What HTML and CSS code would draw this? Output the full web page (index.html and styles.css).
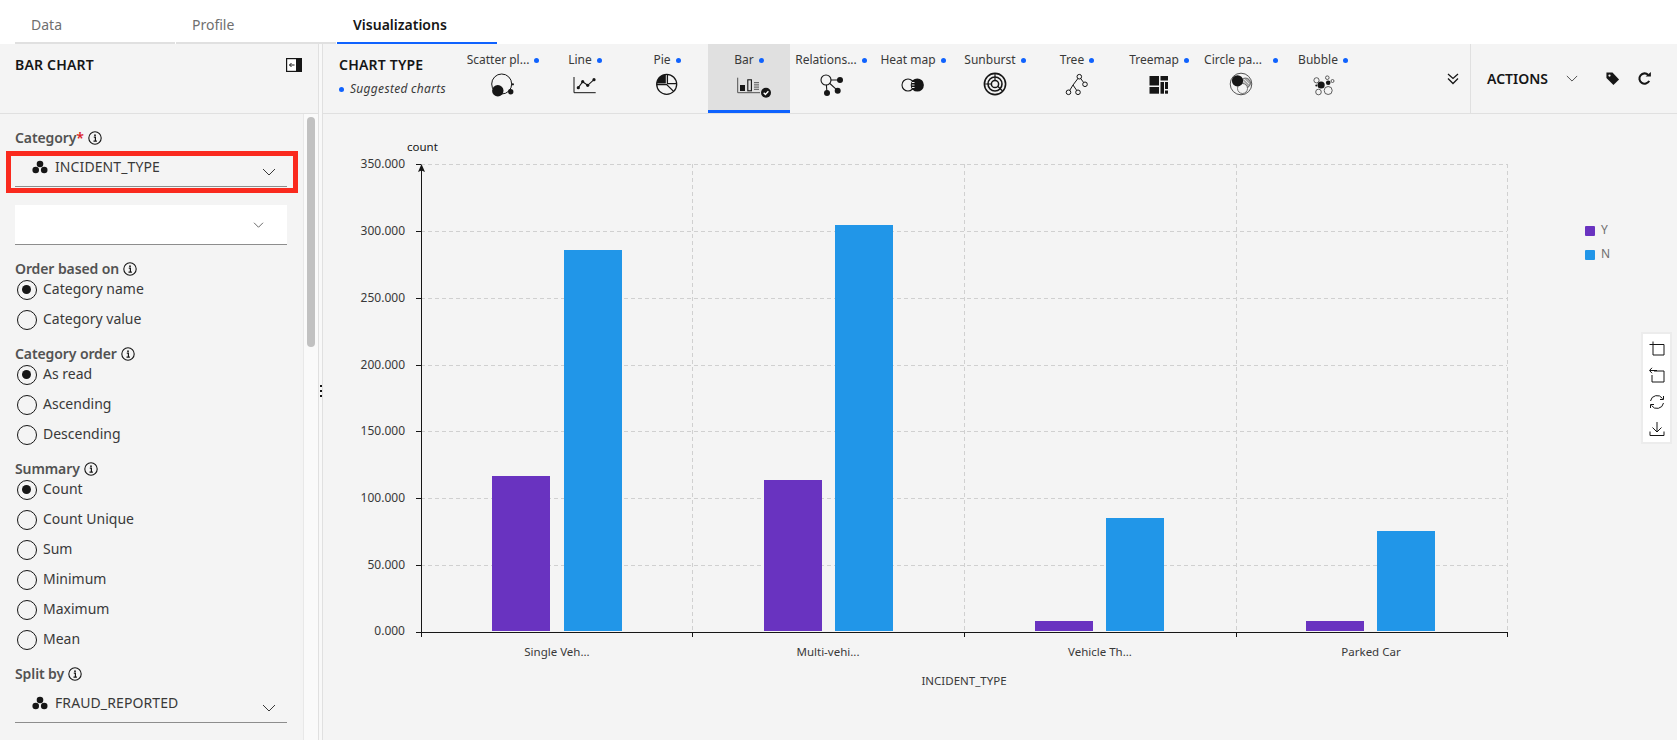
FILE: index.html
```html
<!DOCTYPE html>
<html lang="en">
<head>
<meta charset="utf-8">
<title>Visualizations</title>
<link rel="stylesheet" href="styles.css">
</head>
<body>
<svg class="defs" width="0" height="0" aria-hidden="true">
  <symbol id="i-info" viewBox="0 0 14 14">
    <circle cx="7" cy="7" r="6.2" fill="none" stroke="#161616" stroke-width="1.1"/>
    <path d="M5.8 6.2H7.4V10M5.5 10.1H8.9" fill="none" stroke="#161616" stroke-width="1.2"/>
    <circle cx="7" cy="4.2" r=".9" fill="#161616"/>
  </symbol>
  <symbol id="i-group" viewBox="0 0 16 14">
    <circle cx="8" cy="4" r="3.3" fill="#161616"/>
    <circle cx="3.7" cy="10" r="3.3" fill="#161616"/>
    <circle cx="12.2" cy="10" r="3.3" fill="#161616"/>
  </symbol>
  <symbol id="i-chev" viewBox="0 0 14 8">
    <path d="M1 1L7 7L13 1" fill="none" stroke="#161616" stroke-width=".85"/>
  </symbol>
</svg>

<nav class="tabs">
  <div class="tab">Data</div>
  <div class="tab">Profile</div>
  <div class="tab tab-active">Visualizations</div>
</nav>

<div class="workspace">
  <aside class="sidebar">
    <header class="side-head">
      <h2 class="head-title">BAR CHART</h2>
      <svg class="collapse" viewBox="0 0 16 14">
        <rect x=".6" y=".6" width="14.8" height="12.8" fill="#fff" stroke="#161616" stroke-width="1.2"/>
        <rect x="10" y="0" width="6" height="14" fill="#161616"/>
        <path d="M8.5 7H3.5M5.5 5L3.5 7L5.5 9" fill="none" stroke="#161616"/>
      </svg>
    </header>
    <div class="side-body">
      <form class="form">
        <div class="label label-first">Category<span class="req">*</span> <svg class="info"><use href="#i-info"/></svg></div>
        <div class="select">
          <svg class="group-icon"><use href="#i-group"/></svg>
          <span class="select-text">INCIDENT_TYPE</span>
          <svg class="chev"><use href="#i-chev"/></svg>
          <div class="highlight"></div>
        </div>
        <div class="select-white"><svg class="chev-small"><use href="#i-chev"/></svg></div>

        <div class="label">Order based on <svg class="info"><use href="#i-info"/></svg></div>
        <div class="radios">
          <div class="radio radio-on">Category name</div>
          <div class="radio">Category value</div>
        </div>

        <div class="label">Category order <svg class="info"><use href="#i-info"/></svg></div>
        <div class="radios">
          <div class="radio radio-on">As read</div>
          <div class="radio">Ascending</div>
          <div class="radio">Descending</div>
        </div>

        <div class="label">Summary <svg class="info"><use href="#i-info"/></svg></div>
        <div class="radios">
          <div class="radio radio-on">Count</div>
          <div class="radio">Count Unique</div>
          <div class="radio">Sum</div>
          <div class="radio">Minimum</div>
          <div class="radio">Maximum</div>
          <div class="radio">Mean</div>
        </div>

        <div class="label">Split by <svg class="info"><use href="#i-info"/></svg></div>
        <div class="select select-split">
          <svg class="group-icon"><use href="#i-group"/></svg>
          <span class="select-text">FRAUD_REPORTED</span>
          <svg class="chev"><use href="#i-chev"/></svg>
        </div>
      </form>
      <div class="scrollbar"><div class="thumb"></div></div>
    </div>
  </aside>

  <div class="splitter"><span></span><span></span><span></span></div>

  <main class="main">
    <div class="toolbar">
      <div class="type-head">
        <h2 class="head-title">CHART TYPE</h2>
        <div class="suggested"><span class="dot"></span><em>Suggested charts</em></div>
      </div>
      <div class="types">
        <div class="type">
          <div class="type-label">Scatter pl...<span class="dot"></span></div>
          <svg class="type-icon" viewBox="0 0 32 32"><circle cx="14.7" cy="16" r="10" fill="none" stroke="#161616" stroke-width="1"/><circle cx="10.8" cy="22.8" r="5.7" fill="#161616"/><circle cx="23.7" cy="23.7" r="2.7" fill="#161616"/><circle cx="25.9" cy="16.3" r="1.1" fill="#161616"/></svg>
        </div>
        <div class="type">
          <div class="type-label">Line<span class="dot"></span></div>
          <svg class="type-icon" viewBox="0 0 32 32"><path d="M5 9V24.7H26.7" fill="none" stroke="#161616" stroke-width="1"/><path d="M9.3 19.7L13.7 13.7L18.7 17.3L25 11.7" fill="none" stroke="#161616" stroke-width="1.1"/><g fill="#161616"><circle cx="9.3" cy="19.7" r="1.6"/><circle cx="13.7" cy="13.7" r="1.6"/><circle cx="18.7" cy="17.3" r="1.6"/><circle cx="25" cy="11.7" r="1.6"/></g></svg>
        </div>
        <div class="type">
          <div class="type-label">Pie<span class="dot"></span></div>
          <svg class="type-icon" viewBox="0 0 32 32"><circle cx="15.7" cy="16.3" r="10" fill="none" stroke="#161616" stroke-width="1.3"/><path d="M14.8 15.6H5.6A10 10 0 0 1 14.8 6.2Z" fill="#161616"/><path d="M16.4 6.2V15.7H26" fill="none" stroke="#161616" stroke-width="1.3"/><path d="M5.6 16.6H15.7L22.6 23.4" fill="none" stroke="#161616" stroke-width="1.3"/></svg>
        </div>
        <div class="type type-active">
          <div class="type-label">Bar<span class="dot"></span></div>
          <svg class="type-icon" viewBox="0 0 32 32"><path d="M4.7 9.7V24.7H27" fill="none" stroke="#525252" stroke-width="1"/><rect x="7" y="17" width="5" height="6" fill="#161616"/><rect x="14.8" y="11.8" width="3.6" height="11" fill="none" stroke="#161616" stroke-width="1.1"/><path d="M21 14.7H26M21 16.9H26M21 19.1H26M21 21.3H26" fill="none" stroke="#525252" stroke-width="1"/><circle cx="33" cy="24.7" r="5" fill="#161616"/><path d="M30.7 24.8L32.4 26.5L35.4 23.2" fill="none" stroke="#fff" stroke-width="1.3"/></svg>
        </div>
        <div class="type">
          <div class="type-label">Relations...<span class="dot"></span></div>
          <svg class="type-icon" viewBox="0 0 32 32"><path d="M11 12H25M11 12L12 25M11 12L22.7 22.7" fill="none" stroke="#161616" stroke-width="1.1"/><circle cx="11" cy="12" r="5" fill="#f4f4f4" stroke="#161616" stroke-width="1.1"/><g fill="#161616"><circle cx="25" cy="12" r="3"/><circle cx="12" cy="25" r="3"/><circle cx="22.7" cy="22.7" r="3"/></g></svg>
        </div>
        <div class="type">
          <div class="type-label">Heat map<span class="dot"></span></div>
          <svg class="type-icon" viewBox="0 0 32 32"><circle cx="20.3" cy="17" r="6.6" fill="#161616"/><circle cx="11" cy="17" r="6" fill="none" stroke="#161616" stroke-width="1.1"/><path d="M15 14.5H17.5M14.8 17H17.5M15 19.5H17.5" stroke="#f4f4f4" stroke-width="1" fill="none"/></svg>
        </div>
        <div class="type">
          <div class="type-label">Sunburst<span class="dot"></span></div>
          <svg class="type-icon" viewBox="0 0 32 32"><g fill="none" stroke="#161616"><circle cx="16" cy="16" r="10.6" stroke-width="1.6"/><circle cx="16" cy="16" r="7" stroke-width="1.6"/><circle cx="16" cy="16" r="3.6" stroke-width="1.5"/><path d="M16 12.4V5.4M12.6 16H5.4M19 18.5L23.5 23" stroke-width="1.2"/></g></svg>
        </div>
        <div class="type">
          <div class="type-label">Tree<span class="dot"></span></div>
          <svg class="type-icon" viewBox="0 0 32 32"><path d="M18.3 8.7L24 16.3M18.3 8.7L12 17L7.5 24.3M12 17L17 24.3" fill="none" stroke="#161616" stroke-width="1"/><g fill="#f4f4f4" stroke="#161616" stroke-width="1"><circle cx="18.3" cy="8.7" r="2.3"/><circle cx="24" cy="16.3" r="2.3"/><circle cx="7.5" cy="24.3" r="2.3"/><circle cx="17" cy="24.3" r="2.3"/></g></svg>
        </div>
        <div class="type">
          <div class="type-label">Treemap<span class="dot"></span></div>
          <svg class="type-icon" viewBox="0 0 32 32"><g fill="#161616"><rect x="6.5" y="8" width="9.5" height="9.5"/><rect x="17.5" y="8" width="7.5" height="4.5"/><rect x="6.5" y="19" width="9.5" height="6.7"/><rect x="17.5" y="14" width="3.5" height="11.7"/><rect x="22" y="14" width="3" height="7"/><rect x="22" y="22.5" width="3" height="3.2"/></g></svg>
        </div>
        <div class="type">
          <div class="type-label">Circle pa...<span class="dot dot-far"></span></div>
          <svg class="type-icon" viewBox="0 0 32 32"><circle cx="16" cy="16" r="10.8" fill="none" stroke="#525252" stroke-width="1"/><circle cx="20.5" cy="15" r="5" fill="#a8a8a8" stroke="#525252" stroke-width=".8"/><path d="M17 12L22 18M19 11L24 16M16.5 15L20 20" stroke="#f4f4f4" stroke-width=".8"/><circle cx="17.5" cy="20.5" r="5" fill="#f4f4f4" stroke="#525252" stroke-width=".8"/><circle cx="12.5" cy="12.8" r="5.6" fill="#161616"/></svg>
        </div>
        <div class="type">
          <div class="type-label">Bubble<span class="dot"></span></div>
          <svg class="type-icon" viewBox="0 0 32 32"><g fill="none" stroke="#393939" stroke-width=".8"><circle cx="21.2" cy="22.5" r="4"/><circle cx="11.5" cy="24" r="2.8"/><circle cx="9.5" cy="12.3" r="2.6"/><circle cx="20.3" cy="9.7" r="1.8"/><circle cx="25.5" cy="13" r="1.5"/></g><g fill="#161616"><circle cx="14.1" cy="17" r="3.6"/><circle cx="21.2" cy="14.7" r="2.3"/><circle cx="9.3" cy="17.5" r="1"/></g></svg>
        </div>
      </div>
      <div class="expand">
        <svg class="expand-icon" viewBox="0 0 12 12"><path d="M1 1L6 5.5L11 1M1 5.5L6 10.5L11 5.5" fill="none" stroke="#161616" stroke-width="1.3"/></svg>
      </div>
      <div class="actions">
        <span class="actions-text">ACTIONS</span>
        <svg class="actions-chev"><use href="#i-chev"/></svg>
        <svg class="tag" viewBox="0 0 16 16"><path d="M1.5 1.5H8L15 9L9 15L1.5 7.5Z" fill="#161616"/><circle cx="4.8" cy="4.8" r="1.2" fill="#f4f4f4"/></svg>
        <svg class="refresh" viewBox="0 0 16 16"><path d="M13 10.5A5.5 5.5 0 1 1 12 4.2" fill="none" stroke="#161616" stroke-width="2.2"/><path d="M9.2 5.8H14.8V1Z" fill="#161616"/></svg>
      </div>
    </div>

    <div class="chart">
      <svg class="plot" viewBox="323 114 1354 626">
        <g class="grid">
          <path d="M421 164.5H1507M421 231.5H1507M421 298.5H1507M421 365.5H1507M421 431.5H1507M421 498.5H1507M421 565.5H1507"/>
          <path d="M692.5 164V632M964.5 164V632M1236.5 164V632M1507.5 164V632"/>
        </g>
        <g class="y">
          <rect x="492" y="476" width="58" height="155"/>
          <rect x="764" y="480" width="58" height="151"/>
          <rect x="1035" y="621" width="58" height="10"/>
          <rect x="1306" y="621" width="58" height="10"/>
        </g>
        <g class="n">
          <rect x="564" y="250" width="58" height="381"/>
          <rect x="835" y="225" width="58" height="406"/>
          <rect x="1106" y="518" width="58" height="113"/>
          <rect x="1377" y="531" width="58" height="100"/>
        </g>
        <g class="axis">
          <path d="M421.5 168V637M416 632.5H1507.5M416 164.5H421M416 231.5H421M416 298.5H421M416 365.5H421M416 431.5H421M416 498.5H421M416 565.5H421"/>
          <path d="M692.5 632V637M964.5 632V637M1236.5 632V637M1507.5 632V637"/>
          <path class="arrow" d="M421.5 164L425 172L421.5 170.5L418 172Z"/>
        </g>
        <g class="ticks">
          <text x="405" y="168">350.000</text>
          <text x="405" y="235">300.000</text>
          <text x="405" y="302">250.000</text>
          <text x="405" y="369">200.000</text>
          <text x="405" y="435">150.000</text>
          <text x="405" y="502">100.000</text>
          <text x="405" y="569">50.000</text>
          <text x="405" y="635">0.000</text>
        </g>
        <text class="axis-name" x="407" y="151">count</text>
        <g class="cats">
          <text x="557" y="656">Single Veh...</text>
          <text x="828" y="656">Multi-vehi...</text>
          <text x="1100" y="656">Vehicle Th...</text>
          <text x="1371" y="656">Parked Car</text>
          <text x="964" y="685">INCIDENT_TYPE</text>
        </g>
        <rect class="lg-y" x="1585" y="226" width="10" height="10" rx="1"/>
        <rect class="lg-n" x="1585" y="250" width="10" height="10" rx="1"/>
        <text class="legend" x="1601" y="234">Y</text>
        <text class="legend" x="1601" y="258">N</text>
      </svg>
      <div class="toolbox">
        <svg class="tool" viewBox="0 0 16 16"><path d="M3 4.5H15V15H4V1.5M0.5 4.5H6" fill="none" stroke="#161616"/></svg>
        <svg class="tool" viewBox="0 0 16 16"><path d="M5 4H15V15H3V8" fill="none" stroke="#161616"/><path d="M3 .8L0.5 3.5L3 6.2M1 3.5H8" fill="none" stroke="#161616"/></svg>
        <svg class="tool" viewBox="0 0 16 16"><path d="M1.5 7A6.6 6.6 0 0 1 13.5 4.5M14.5 9A6.6 6.6 0 0 1 2.5 11.5" fill="none" stroke="#161616"/><path d="M14.5 2V5.5H11M1.5 14V10.5H5" fill="none" stroke="#161616"/></svg>
        <svg class="tool" viewBox="0 0 16 16"><path d="M8 1V11M3.5 6.5L8 11L12.5 6.5M1 10.5V14.5H15V10.5" fill="none" stroke="#161616"/></svg>
      </div>
    </div>
  </main>
</div>
</body>
</html>
```

FILE: styles.css
```css
* { box-sizing: border-box; }
html, body { margin: 0; height: 100%; }
body {
  width: 1678px;
  height: 740px;
  overflow: hidden;
  background: #fff;
  font-family: "Noto Sans", "Liberation Sans", sans-serif;
  color: #161616;
  font-size: 14px;
  display: flex;
  flex-direction: column;
}
.defs { position: absolute; }

/* tabs */
.tabs {
  flex: none;
  height: 44px;
  padding-left: 15px;
  display: flex;
  gap: 1px;
}
.tab {
  width: 160px;
  height: 44px;
  padding: 15px 0 0 16px;
  line-height: 20px;
  color: #6f6f6f;
  border-bottom: 2px solid #e0e0e0;
}
.tab-active {
  color: #161616;
  font-weight: 600;
  border-bottom-color: #0f62fe;
}

/* layout */
.workspace {
  flex: 1;
  min-height: 0;
  display: flex;
  background: #f4f4f4;
  margin-right: 1px;
}
.sidebar {
  width: 318px;
  flex: none;
  display: flex;
  flex-direction: column;
}
.side-head {
  height: 70px;
  flex: none;
  padding: 14px 16px 0 15px;
  border-bottom: 1px solid #e0e0e0;
  display: flex;
  justify-content: space-between;
  align-items: flex-start;
}
.head-title {
  margin: 0;
  font-size: 14px;
  line-height: 14px;
  font-weight: 600;
  letter-spacing: .2px;
}
.collapse { width: 16px; height: 14px; }
.side-body { flex: 1; min-height: 0; display: flex; }
.form { width: 303px; flex: none; padding: 16px 16px 0 15px; overflow: hidden; }
.scrollbar {
  width: 15px;
  flex: none;
  background: #fafafa;
  border-left: 1px solid #e8e8e8;
  padding: 3px 3px 0 3px;
}
.thumb { height: 230px; background: #c1c1c1; border-radius: 4px; }

/* form */
.label {
  height: 16px;
  margin: 18px 0 3px;
  line-height: 16px;
  font-weight: 600;
  letter-spacing: -.1px;
  color: #525252;
  display: flex;
  align-items: center;
  gap: 4px;
}
.select-white + .label { margin-top: 16px; }
.label-first { margin: 0 0 1px; }
.req { color: #da1e28; margin-left: -4px; }
.info { width: 14px; height: 14px; flex: none; }
.select {
  position: relative;
  height: 40px;
  padding: 9px 0 0 17px;
  border-bottom: 1px solid #8d8d8d;
  display: flex;
  align-items: flex-start;
  line-height: 22px;
}
.select-split { margin-top: -2px; }
.group-icon { width: 16px; height: 14px; margin-top: 4px; flex: none; }
.select-text { margin-left: 7px; letter-spacing: .1px; color: #393939; }
.chev { position: absolute; right: 11px; top: 21px; width: 14px; height: 8px; }
.highlight {
  position: absolute;
  left: -9px;
  top: 4px;
  width: 292px;
  height: 42px;
  border: 5px solid #fa2a1e;
}
.select-white {
  position: relative;
  height: 40px;
  margin-top: 18px;
  background: #fff;
  border-bottom: 1px solid #8d8d8d;
}
.chev-small { position: absolute; right: 23px; top: 17px; width: 11px; height: 6px; }
.radios { display: flex; flex-direction: column; gap: 12px; }
.radio {
  position: relative;
  height: 18px;
  padding-left: 28px;
  line-height: 18px;
  color: #393939;
}
.radio::before {
  content: "";
  position: absolute;
  left: 2px;
  top: 0;
  width: 18px;
  height: 18px;
  border: 1px solid #161616;
  border-radius: 50%;
}
.radio-on::after {
  content: "";
  position: absolute;
  left: 6.5px;
  top: 4.5px;
  width: 9px;
  height: 9px;
  background: #161616;
  border-radius: 50%;
}

/* splitter */
.splitter {
  width: 5px;
  flex: none;
  border-left: 1px solid #e0e0e0;
  border-right: 1px solid #e0e0e0;
  background: #f8f8f8;
  display: flex;
  flex-direction: column;
  align-items: center;
  justify-content: flex-start;
  gap: 3px;
  padding-top: 341px;
}
.splitter span { width: 2px; height: 2px; flex: none; background: #161616; }

/* main */
.main { flex: 1; min-width: 0; display: flex; flex-direction: column; }
.toolbar {
  height: 70px;
  flex: none;
  display: flex;
  border-bottom: 1px solid #e0e0e0;
}
.type-head { width: 139px; flex: none; padding: 14px 0 0 16px; }
.suggested {
  display: flex;
  align-items: center;
  gap: 6px;
  margin-top: 9px;
  font-size: 12px;
  line-height: 16px;
  letter-spacing: .3px;
  color: #393939;
  white-space: nowrap;
}
.dot {
  display: inline-block;
  width: 5px;
  height: 5px;
  border-radius: 50%;
  background: #0f62fe;
  flex: none;
}
.types { display: flex; flex: none; }
.type {
  width: 82px;
  height: 69px;
  padding-top: 8px;
  display: flex;
  flex-direction: column;
  align-items: center;
}
.type-active { background: #e0e0e0; border-bottom: 3px solid #0f62fe; }
.type-label {
  height: 16px;
  font-size: 12px;
  line-height: 16px;
  color: #393939;
  display: flex;
  align-items: center;
  gap: 5px;
  white-space: nowrap;
}
.dot-far { margin-left: 6px; }
.type-icon { width: 32px; height: 32px; overflow: visible; flex: none; }
.expand { flex: 1; position: relative; }
.expand-icon { position: absolute; right: 11px; top: 29px; width: 12px; height: 12px; }
.actions {
  width: 207px;
  flex: none;
  border-left: 1px solid #e0e0e0;
  display: flex;
  align-items: center;
  padding-left: 16px;
}
.actions-text { font-weight: 600; font-size: 14px; width: 60px; white-space: nowrap; }
.actions-chev { width: 12px; height: 7px; margin-left: 19px; }
.tag { width: 15px; height: 15px; margin-left: 27px; }
.refresh { width: 15px; height: 15px; margin-left: 17px; }

/* chart */
.chart { flex: 1; min-height: 0; position: relative; }
.plot { display: block; width: 100%; height: 100%; font-size: 11.5px; }
.grid path { fill: none; stroke: #d0d0d0; stroke-width: 1; stroke-dasharray: 4 3; }
.axis path { fill: none; stroke: #161616; stroke-width: 1; }
.axis .arrow { fill: #161616; stroke: none; }
.y rect, .lg-y { fill: #6933c0; }
.n rect, .lg-n { fill: #2196e8; }
.ticks text { text-anchor: end; fill: #393939; font-size: 12px; }
.axis-name { fill: #161616; }
.cats text { text-anchor: middle; fill: #393939; }
.legend { fill: #6f6f6f; font-size: 12px; }
.toolbox {
  position: absolute;
  right: 5px;
  top: 218px;
  width: 31px;
  height: 112px;
  background: #fff;
  border: 2px solid #ececec;
  display: flex;
  flex-direction: column;
  align-items: center;
  padding-top: 6px;
  gap: 11px;
}
.tool { width: 16px; height: 16px; flex: none; }
```
